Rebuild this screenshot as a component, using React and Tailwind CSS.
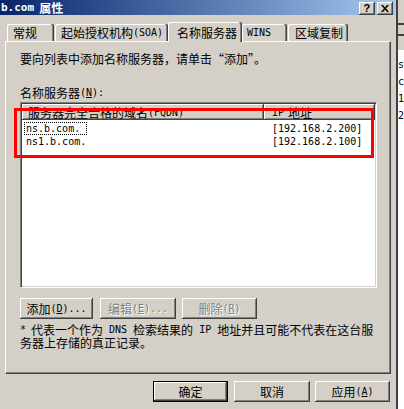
import React from 'react';

const raised = 'shadow-[inset_-1px_-1px_#404040,inset_1px_1px_#ffffff,inset_-2px_-2px_#808080]';
const mono = "font-['DejaVu_Sans_Mono',monospace] text-[10px]";

// Latin fragment in half-width monospace, like SimSun's Latin glyphs
const M = ({ children, className = '' }) => <span className={`${mono} ${className}`}>{children}</span>;

const Btn = ({ w, disabled, isDefault, children }) => (
  <div
    className={`h-[21px] ${w} flex items-center justify-center bg-[#d4d0c8] ${
      isDefault
        ? 'border border-black shadow-[inset_-1px_-1px_#404040,inset_1px_1px_#ffffff,inset_-2px_-2px_#808080]'
        : raised
    } ${disabled ? 'text-[#808080] [text-shadow:1px_1px_0_#ffffff]' : 'text-black'}`}
  >
    {children}
  </div>
);

const tabs = [
  { label: '常规', w: 'w-[47px]', pl: 'pl-[6px]' },
  { label: '起始授权机构', latin: '(SOA)', w: 'w-[113px]', pl: 'pl-[6px]' },
  { label: '名称服务器', w: 'w-[74px]', pl: 'pl-[9px]', active: true },
  { latin: 'WINS', w: 'w-[45px]', pl: 'pl-[5px]' },
  { label: '区域复制', w: 'w-[60px]', pl: 'pl-[7px]' },
];

const rows = [
  { name: 'ns.b.com.', ip: '[192.168.2.200]', focus: true },
  { name: 'ns1.b.com.', ip: '[192.168.2.100]' },
];

export default function App() {
  return (
    <div className="w-[404px] h-[409px] flex bg-[#d4d0c8] overflow-hidden font-['Noto_Sans_CJK_SC',sans-serif] text-[12px] leading-[13px] text-black">
      {/* dialog */}
      <div className="w-[397px] h-full flex flex-col">
        {/* title bar */}
        <div className="h-[15px] flex items-center bg-gradient-to-r from-[#0a246a] to-[#a6caf0] pl-[1px] pr-[3px]">
          <span className="text-white font-bold flex items-center gap-[5px]">
            <span className="font-['DejaVu_Sans_Mono',monospace] text-[11px] font-bold">b.com</span>
            <span>属性</span>
          </span>
          <div className="ml-auto flex gap-[2px] pt-[1px]">
            <div className={`w-[16px] h-[13px] bg-[#d4d0c8] ${raised} flex items-center justify-center font-['Liberation_Sans',sans-serif] font-bold text-[11px]`}>?</div>
            <div className={`w-[16px] h-[13px] bg-[#d4d0c8] ${raised} flex items-center justify-center`}>
              <svg width="8" height="7" viewBox="0 0 8 7">
                <path d="M0 0h2l2 2.5L6 0h2L5 3.5 8 7H6L4 4.5 2 7H0l3-3.5z" fill="#000" />
              </svg>
            </div>
          </div>
        </div>

        {/* tabs */}
        <div className="h-[26px] flex items-end pl-[7px] relative z-10">
          {tabs.map((t, i) => (
            <div
              key={i}
              className={`${t.w} ${t.pl} flex items-center rounded-t-[2px] bg-[#d4d0c8] ${
                t.active
                  ? 'h-[20px] -mb-px -ml-px shadow-[inset_-1px_0_#404040,inset_-2px_0_#808080,inset_1px_1px_#ffffff]'
                  : 'h-[17px] mr-px shadow-[inset_-1px_0_#404040,inset_-2px_0_#808080,inset_1px_1px_#ffffff]'
              }`}
            >
              {t.label && <span>{t.label}</span>}
              {t.latin && <M>{t.latin}</M>}
            </div>
          ))}
        </div>

        {/* tab panel */}
        <div className="ml-[5px] w-[386px] h-[333px] border border-t-white border-l-white border-r-[#404040] border-b-[#404040] shadow-[inset_-1px_-1px_#808080] pl-[14px] pt-[10px] flex flex-col">
          <div className="h-[13px] flex items-center">
            要向列表中添加名称服务器，请单击“添加”。
          </div>
          <div className="h-[13px] mt-[21px] flex items-center">
            名称服务器
            <M>
              (<span className="underline">N</span>):
            </M>
          </div>

          {/* list view */}
          <div className="relative mt-[3px] w-[357px] h-[186px] bg-white border border-t-[#808080] border-l-[#808080] border-b-white border-r-white shadow-[inset_1px_1px_#404040,inset_-1px_-1px_#d4d0c8] p-[1px]">
            <div className="flex h-[16px] bg-[#d4d0c8]">
              <div className={`w-[242px] h-full flex items-center pl-[6px] ${raised}`}>
                服务器完全合格的域名<M>(FQDN)</M>
              </div>
              <div className={`flex-1 h-full flex items-center pl-[8px] gap-[4px] ${raised}`}>
                <M>IP</M>
                <span>地址</span>
              </div>
            </div>
            <div className="pt-[1px]">
              {rows.map((r) => (
                <div key={r.name} className="h-[13px] flex items-center">
                  <div className="w-[242px] pl-[2px]">
                    <span
                      className={`inline-flex items-center h-[13px] px-[1px] ${
                        r.focus ? 'border border-dotted border-black w-[63px]' : 'border border-transparent'
                      }`}
                    >
                      <M>{r.name}</M>
                    </span>
                  </div>
                  <div className="pl-[8px]">
                    <M>{r.ip}</M>
                  </div>
                </div>
              ))}
            </div>
          </div>

          {/* buttons */}
          <div className="flex mt-[10px]">
            <Btn w="w-[73px]">
              添加
              <M>
                (<span className="underline">D</span>)...
              </M>
            </Btn>
            <div className="ml-[7px]">
              <Btn w="w-[76px]" disabled>
                编辑
                <M>
                  (<span className="underline">E</span>)...
                </M>
              </Btn>
            </div>
            <div className="ml-[6px]">
              <Btn w="w-[75px]" disabled>
                删除
                <M>
                  (<span className="underline">R</span>)
                </M>
              </Btn>
            </div>
          </div>

          <div className="mt-[4px] flex flex-col">
            <div className="h-[13px] flex items-center whitespace-nowrap">
              <M className="mr-[5px]">*</M>
              <span>代表一个作为</span>
              <M className="mx-[6px]">DNS</M>
              <span>检索结果的</span>
              <M className="mx-[6px]">IP</M>
              <span>地址并且可能不代表在这台服</span>
            </div>
            <div className="h-[13px] flex items-center">务器上存储的真正记录。</div>
          </div>
        </div>

        {/* bottom buttons */}
        <div className="flex justify-end pr-[6px] mt-[7px]">
          <Btn w="w-[75px]" isDefault>
            确定
          </Btn>
          <div className="ml-[6px]">
            <Btn w="w-[76px]">取消</Btn>
          </div>
          <div className="ml-[5px]">
            <Btn w="w-[75px]">
              应用
              <M>
                (<span className="underline">A</span>)
              </M>
            </Btn>
          </div>
        </div>
      </div>

      {/* dialog edge */}
      <div className="w-[2px] h-full bg-[#404040]" />

      {/* window behind */}
      <div className="flex-1 h-full flex flex-col">
        <div className="h-[23px]" />
        <div className="h-[2px] bg-[#404040]" />
        <div className="h-[9px]" />
        <div className="h-[2px] bg-[#404040]" />
        <div className="h-[14px]" />
        <div className="flex-1 bg-white pt-[8px] flex flex-col gap-[4px] overflow-hidden">
          {['s', 'c', '1', '2'].map((c) => (
            <div key={c} className={`h-[13px] flex items-center ${mono}`}>
              {c}
            </div>
          ))}
        </div>
      </div>

      {/* red highlight drawn over the list */}
      <div className="absolute left-[14px] top-[108px] w-[360px] h-[50px] border-[3px] border-[#ff0000] pointer-events-none" />
    </div>
  );
}
